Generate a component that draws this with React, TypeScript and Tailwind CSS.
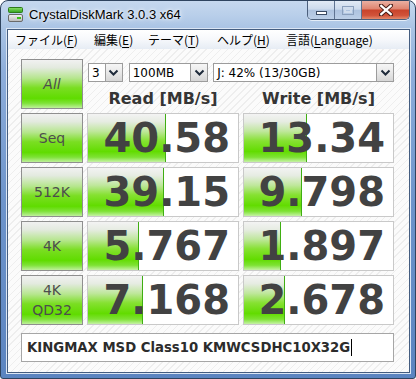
import React from "react";

const barCls =
  "bg-[linear-gradient(to_bottom,#f3f3f3_0%,#e6ece2_16%,#bfe79c_36%,#86e132_56%,#62dc00_78%,#7ee234_90%,#c6f2a6_100%)]";

function Chevron() {
  return (
    <svg width="11" height="8" viewBox="0 0 11 8">
      <path d="M1.5 1.5 L5.5 5.5 L9.5 1.5" fill="none" stroke="#1e2a3a" strokeWidth="2" />
    </svg>
  );
}

function Combo({ w, text }: { w: string; text: string }) {
  return (
    <div className={`${w} h-[19px] flex border border-[#9c9c9c] bg-white`}>
      <div className="flex-1 flex items-center pl-[3px] font-['DejaVu_Sans',sans-serif] text-[12px] text-black leading-none whitespace-nowrap overflow-hidden">
        {text}
      </div>
      <div className="w-[17px] border-l border-[#9c9c9c] flex items-center justify-center bg-[linear-gradient(to_bottom,#f6f6f6_0%,#e8e8e8_50%,#d6d6d6_100%)]">
        <Chevron />
      </div>
    </div>
  );
}

function TestButton({ children }: { children: React.ReactNode }) {
  return (
    <div className="h-[50px] border border-[#8f8f8f] flex flex-col items-center justify-center bg-[linear-gradient(to_bottom,#f1f1f1_0%,#e3eadf_16%,#b6e68e_38%,#7ade22_58%,#60dc00_80%,#7ee238_90%,#bff09c_100%)] text-[#4d4d4d] font-['DejaVu_Sans',sans-serif] text-[14px] leading-[20px]">
      {children}
    </div>
  );
}

function Cell({ value, w }: { value: string; w: number }) {
  return (
    <div className="relative h-[50px] border border-[#c9c9c9] bg-white flex items-center justify-end pr-[8px]">
      <div
        className={`absolute left-0 top-0 bottom-0 border-r border-[#3fae12] ${barCls}`}
        style={{ width: w }}
      />
      <span className="relative font-['DejaVu_Sans',sans-serif] font-bold text-[40px] leading-none text-[#424242]">
        {value}
      </span>
    </div>
  );
}

const rows = [
  { label: <span>Seq</span>, r: "40.58", rw: 78, w: "13.34", ww: 63 },
  { label: <span>512K</span>, r: "39.15", rw: 76, w: "9.798", ww: 58 },
  { label: <span>4K</span>, r: "5.767", rw: 51, w: "1.897", ww: 37 },
  {
    label: (
      <>
        <span>4K</span>
        <span>QD32</span>
      </>
    ),
    r: "7.168",
    rw: 55,
    w: "2.678",
    ww: 41,
  },
];

function MenuItem({ w, label, acc, after }: { w: string; label: string; acc: string; after?: string }) {
  return (
    <div className={`${w} whitespace-nowrap`}>
      {label}(<span className="underline underline-offset-2">{acc}</span>
      {after}
      {")"}
    </div>
  );
}

export default function App() {
  return (
    <div className="w-[416px] h-[379px] flex flex-col rounded-t-[8px] rounded-b-[3px] border border-[#2f445f] bg-[linear-gradient(to_bottom,#c6d8ee_0px,#b9cfea_14px,#a9c3e4_28px,#8eaedb_70px,#6d94cb_200px,#5b84c0_379px)] overflow-hidden">
      {/* Title bar */}
      <div className="h-[27px] flex items-start shrink-0">
        <div className="flex items-center h-[27px] pl-[7px]">
          <svg width="16" height="16" viewBox="0 0 16 16">
            <defs>
              <linearGradient id="g1" x1="0" y1="0" x2="0" y2="1">
                <stop offset="0" stopColor="#8fe06a" />
                <stop offset="1" stopColor="#2fa21a" />
              </linearGradient>
              <linearGradient id="g2" x1="0" y1="0" x2="0" y2="1">
                <stop offset="0" stopColor="#f4f4f4" />
                <stop offset="1" stopColor="#b8b8b8" />
              </linearGradient>
            </defs>
            <rect x="0.5" y="0.5" width="14" height="5" rx="1" fill="url(#g1)" stroke="#2d7a1a" />
            <rect x="0.5" y="7.5" width="14" height="7" rx="1.5" fill="url(#g2)" stroke="#6a6a6a" />
            <rect x="9" y="10" width="4" height="2" fill="#3cc21a" />
          </svg>
          <span className="ml-[5px] font-['Liberation_Sans',sans-serif] text-[13px] text-black leading-none [text-shadow:0_0_6px_#ffffff,0_0_3px_#ffffff]">
            CrystalDiskMark 3.0.3 x64
          </span>
        </div>
        <div className="ml-auto mr-[5px] flex h-[19px] rounded-b-[5px] border border-t-0 border-[#4b5f7c] overflow-hidden shadow-[0_1px_0_#e4edf8]">
          <div className="w-[27px] flex items-center justify-center border-r border-[#5f7391] bg-[linear-gradient(to_bottom,#e1eaf5_0%,#ccdaec_45%,#aec3df_52%,#bccfe7_100%)]">
            <div className="w-[11px] h-[4px] mt-[5px] bg-white border border-[#3b4b63]" />
          </div>
          <div className="w-[27px] flex items-center justify-center border-r border-[#5f7391] bg-[linear-gradient(to_bottom,#e1eaf5_0%,#ccdaec_45%,#aec3df_52%,#bccfe7_100%)]">
            <div className="w-[12px] h-[9px] border border-[#8ba0bd] flex items-center justify-center">
              <div className="w-[8px] h-[5px] border-2 border-[#cfdcec] border-t-[2px]" />
            </div>
          </div>
          <div className="w-[47px] flex items-center justify-center bg-[linear-gradient(to_bottom,#eab0a2_0%,#df8672_42%,#c9442c_52%,#d1533a_80%,#e38a6c_100%)]">
            <svg width="14" height="12" viewBox="0 0 14 12">
              <path d="M2 1.5 L12 10.5 M12 1.5 L2 10.5" stroke="#4a1f18" strokeWidth="4.2" strokeLinecap="square" />
              <path d="M2.2 1.8 L11.8 10.2 M11.8 1.8 L2.2 10.2" stroke="#ffffff" strokeWidth="2.2" strokeLinecap="square" />
            </svg>
          </div>
        </div>
      </div>

      {/* Client frame */}
      <div className="flex-1 ml-[5px] mr-[4px] mb-[4px] border border-[#dbe6f4]">
        <div className="h-full border border-[#445d80] flex flex-col">
          {/* Menu */}
          <div className="h-[19px] shrink-0 flex items-center pl-[7px] font-['Noto_Sans_CJK_JP',sans-serif] text-[12px] leading-none text-black bg-[linear-gradient(to_bottom,#ffffff_0%,#f6f8fb_50%,#e6ecf4_100%)]">
            <MenuItem w="w-[79px]" label="ファイル" acc="F" />
            <MenuItem w="w-[54px]" label="編集" acc="E" />
            <MenuItem w="w-[69px]" label="テーマ" acc="T" />
            <MenuItem w="w-[69px]" label="ヘルプ" acc="H" />
            <MenuItem w="w-[100px]" label="言語" acc="L" after="anguage" />
          </div>

          {/* Content */}
          <div className="flex-1 pl-[13px] pt-[10px] bg-[repeating-linear-gradient(135deg,#eeeeee_0px,#eeeeee_1px,#fbfbfb_1px,#fbfbfb_5px)]">
            <div className="grid grid-cols-[62px_152px_151px] gap-x-[4px] gap-y-[4px]">
              <TestButton>
                <span className="italic">All</span>
              </TestButton>
              <div className="col-span-2 flex flex-col">
                <div className="flex mt-[4px] pl-[1px]">
                  <Combo w="w-[35px]" text="3" />
                  <div className="w-[6px]" />
                  <Combo w="w-[80px]" text="100MB" />
                  <div className="w-[5px]" />
                  <Combo w="w-[182px]" text="J: 42% (13/30GB)" />
                </div>
                <div className="flex mt-[9px] h-[16px] font-['DejaVu_Sans',sans-serif] font-bold text-[16px] leading-none text-[#353535]">
                  <div className="w-[152px] text-center">Read [MB/s]</div>
                  <div className="w-[4px]" />
                  <div className="w-[151px] text-center">Write [MB/s]</div>
                </div>
              </div>
              {rows.map((row, i) => (
                <React.Fragment key={i}>
                  <TestButton>{row.label}</TestButton>
                  <Cell value={row.r} w={row.rw} />
                  <Cell value={row.w} w={row.ww} />
                </React.Fragment>
              ))}
            </div>
            <div className="mt-[8px] w-[373px] h-[29px] border border-[#a6a6a6] bg-white flex items-center pl-[5px]">
              <span className="font-['DejaVu_Sans',sans-serif] font-bold text-[13.25px] leading-none text-[#2c2c2c] whitespace-nowrap">
                KINGMAX MSD Class10 KMWCSDHC10X32G
              </span>
              <span className="ml-[1px] w-[1px] h-[17px] bg-black" />
            </div>
          </div>
        </div>
      </div>
    </div>
  );
}
